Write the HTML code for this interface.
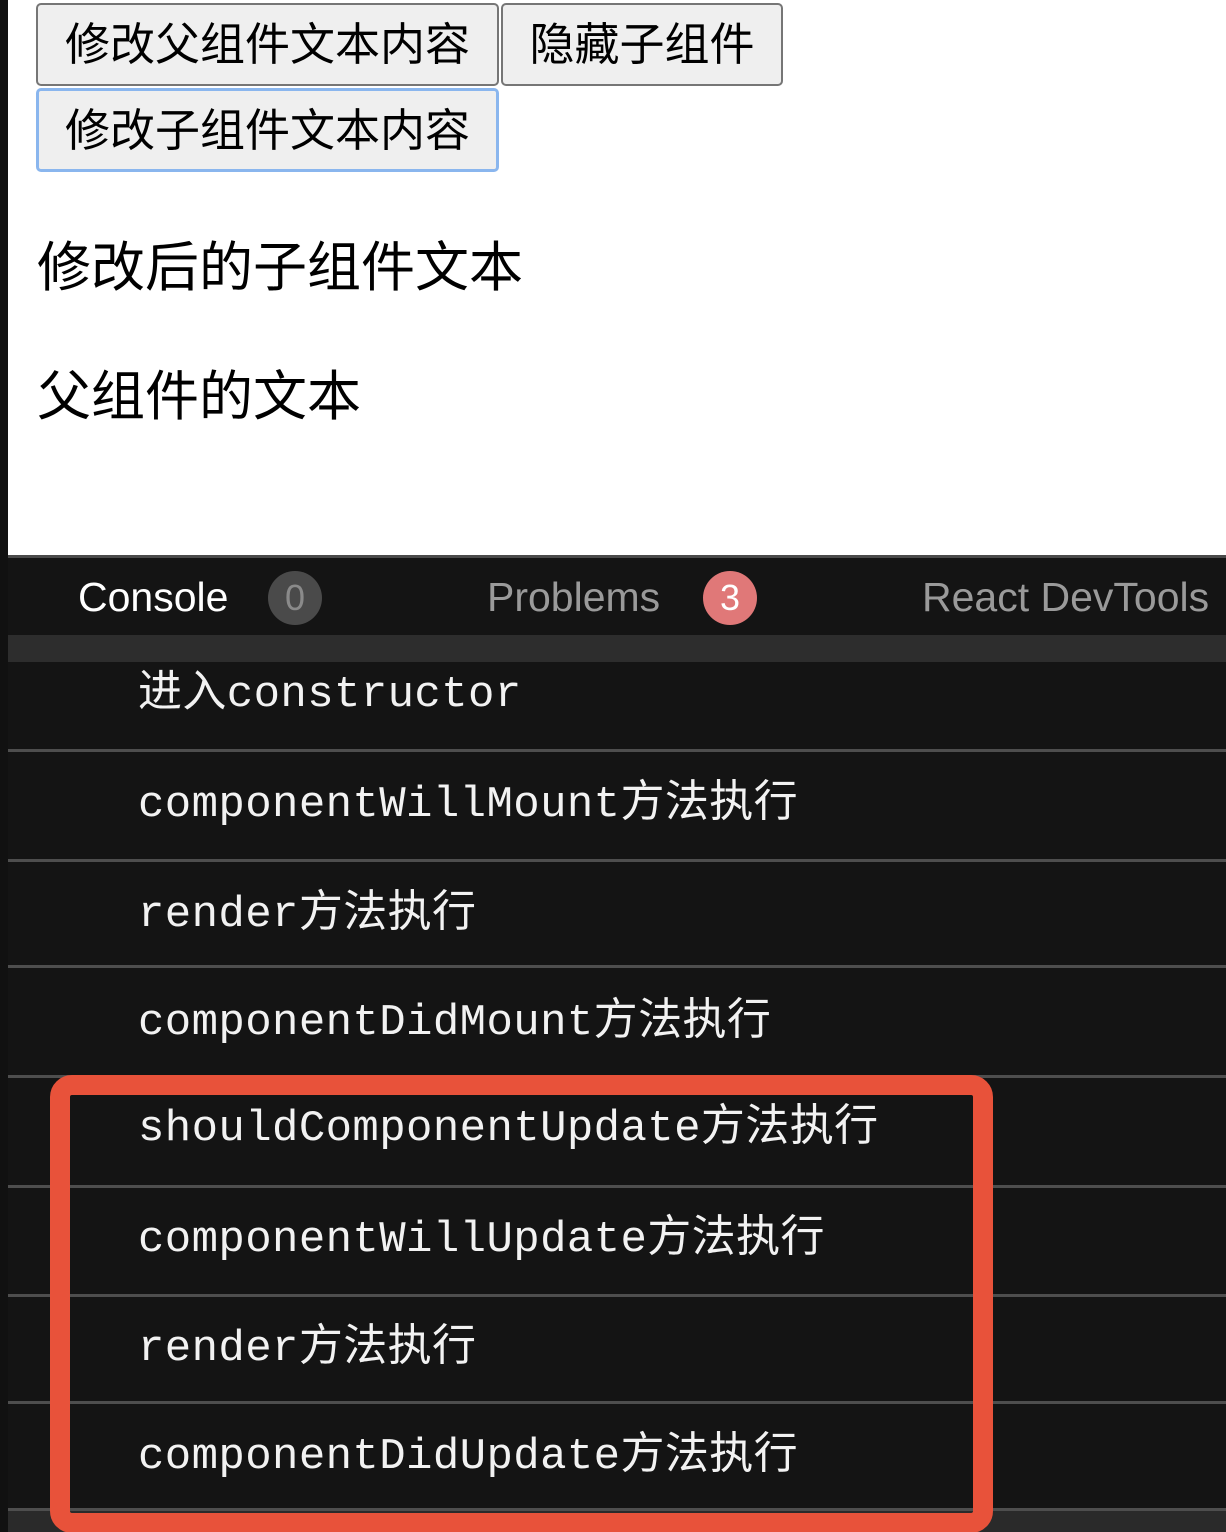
<!DOCTYPE html>
<html><head><meta charset="utf-8">
<style>
*{margin:0;padding:0;box-sizing:border-box}
html,body{width:1226px;height:1532px;overflow:hidden;background:#fff}
body{position:relative;font-family:"Liberation Sans","Noto Sans CJK SC",sans-serif}
.abs{position:absolute}
.btn{position:absolute;background:#efefef;border:2px solid #767676;border-radius:5px;font-size:45px;color:#000;display:flex;align-items:center;justify-content:center;white-space:nowrap;line-height:1}
.big{position:absolute;left:37px;font-size:54px;line-height:1;color:#000;white-space:nowrap}
.panel{position:absolute;left:8px;top:555px;width:1218px;height:977px;background:#141414;border-top:3px solid #4a4a4a}
.tab{position:absolute;top:17px;font-size:41px;line-height:44px;font-family:"Liberation Sans",sans-serif;white-space:nowrap}
.badge{position:absolute;top:13px;width:54px;height:54px;border-radius:50%;font-size:36px;line-height:54px;text-align:center;font-family:"Liberation Sans",sans-serif}
.row{position:absolute;left:0;width:1218px;border-bottom:3px solid #4e4e4e}
.row span{position:absolute;left:130px;font-family:"Liberation Mono","Noto Sans CJK SC",monospace;font-size:44px;letter-spacing:0.4px;color:#f2f2f2;white-space:nowrap;line-height:1}
</style></head><body>
<div class="abs" style="left:0;top:0;width:8px;height:1532px;background:#111"></div>
<div class="btn" style="left:36px;top:3px;width:463px;height:83px">修改父组件文本内容</div>
<div class="btn" style="left:501px;top:3px;width:282px;height:83px">隐藏子组件</div>
<div class="btn" style="left:36px;top:88px;width:463px;height:84px;border:3px solid #8ab6ee">修改子组件文本内容</div>
<div class="big" style="top:241px">修改后的子组件文本</div>
<div class="big" style="top:370px">父组件的文本</div>

<div class="panel">
  <div class="tab" style="left:70px;color:#fff">Console</div>
  <div class="badge" style="left:260px;background:#4a4a4a;color:#8a8a8a">0</div>
  <div class="tab" style="left:479px;color:#9a9a9a">Problems</div>
  <div class="badge" style="left:695px;background:#e07878;color:#fff">3</div>
  <div class="tab" style="left:914px;color:#9a9a9a">React DevTools</div>
  <div class="abs" style="left:0;top:77px;width:1218px;height:27px;background:#2d2d2d"></div>
  <div class="row" style="top:104px;height:90px"><span style="top:11px">进入constructor</span></div>
  <div class="row" style="top:194px;height:110px"><span style="top:31px">componentWillMount方法执行</span></div>
  <div class="row" style="top:304px;height:106px"><span style="top:31px">render方法执行</span></div>
  <div class="row" style="top:410px;height:110px"><span style="top:33px">componentDidMount方法执行</span></div>
  <div class="row" style="top:520px;height:110px"><span style="top:29px">shouldComponentUpdate方法执行</span></div>
  <div class="row" style="top:630px;height:109px"><span style="top:30px">componentWillUpdate方法执行</span></div>
  <div class="row" style="top:739px;height:107px"><span style="top:30px">render方法执行</span></div>
  <div class="row" style="top:846px;height:107px"><span style="top:31px">componentDidUpdate方法执行</span></div>
  <div class="abs" style="left:0;top:953px;width:1218px;height:24px;background:#2a2a2a"></div>
</div>
<div class="abs" style="left:50px;top:1075px;width:943px;height:458px;border:20px solid #e8523a;border-radius:22px"></div>
</body></html>
